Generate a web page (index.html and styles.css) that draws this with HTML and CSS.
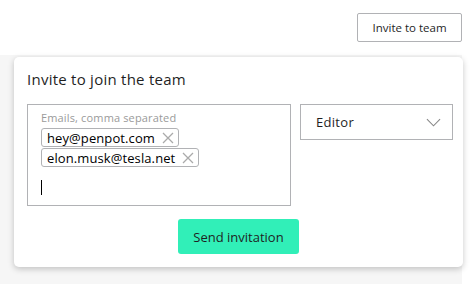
FILE: index.html
```html
<!DOCTYPE html>
<html>
<head>
<meta charset="utf-8">
<link rel="stylesheet" href="styles.css">
</head>
<body>
<header class="topbar">
  <button class="btn-outline">Invite to team</button>
</header>
<main class="stage">
  <section class="card">
    <h2 class="card-title">Invite to join the team</h2>
    <div class="form-row">
      <div class="emails">
        <div class="emails-label">Emails, comma separated</div>
        <div class="chip"><span>hey@penpot.com</span><svg class="chip-x" viewBox="0 0 12 12" width="12" height="12"><path d="M1 1L11 11M11 1L1 11"/></svg></div>
        <div class="chip"><span>elon.musk@tesla.net</span><svg class="chip-x" viewBox="0 0 12 12" width="12" height="12"><path d="M1 1L11 11M11 1L1 11"/></svg></div>
        <div class="caret"></div>
      </div>
      <div class="select">
        <span>Editor</span>
        <svg class="chev" viewBox="0 0 16 9" width="15" height="9"><path d="M1 1L8 8L15 1"/></svg>
      </div>
    </div>
    <div class="actions">
      <button class="btn-primary">Send invitation</button>
    </div>
  </section>
</main>
</body>
</html>
```
FILE: styles.css
```css
* { box-sizing: border-box; }
html, body { margin: 0; padding: 0; background: #fff; }
body {
  font-family: "Open Sans", "Noto Sans", sans-serif;
  color: #1f1f1f;
  width: 476px;
  height: 284px;
  overflow: hidden;
}
.topbar {
  height: 55px;
  display: flex;
  justify-content: flex-end;
  align-items: flex-start;
  padding: 13px 14px 0 0;
}
.btn-outline {
  font-family: inherit;
  font-size: 11.5px;
  color: #1f1f1f;
  background: #fff;
  border: 1px solid #b1b2b5;
  border-radius: 2px;
  width: 105px;
  height: 29px;
  padding: 0;
}
.stage {
  background: #f6f6f6;
  width: 462px;
  height: 229px;
  padding: 2px 0 0 14px;
}
.card {
  width: 449px;
  height: 210px;
  background: #fff;
  border-radius: 5px;
  box-shadow: 0 2px 6px rgba(0,0,0,0.22);
  padding: 13px 13px 13px 13px;
  display: flex;
  flex-direction: column;
}
.card-title {
  margin: 0;
  font-size: 15px;
  letter-spacing: 0.25px;
  font-weight: 400;
  line-height: 19px;
  color: #1f1f1f;
}
.form-row {
  display: flex;
  gap: 9px;
  margin-top: 15px;
  align-items: flex-start;
}
.emails {
  flex-shrink: 0;
  width: 264px;
  height: 102px;
  border: 1px solid #b1b2b5;
  padding: 6px 13px 0 13px;
  display: flex;
  flex-direction: column;
  align-items: flex-start;
}
.emails-label {
  font-size: 11px;
  letter-spacing: 0.15px;
  line-height: 14px;
  color: #9a9a9a;
  margin-bottom: 3px;
}
.chip {
  display: flex;
  align-items: center;
  gap: 7px;
  height: 19px;
  border: 1px solid #b1b2b5;
  border-radius: 3px;
  padding: 0 4px 0 5px;
  font-size: 13px;
  letter-spacing: 0.1px;
  color: #000;
  margin-bottom: 1px;
}
.chip-x { stroke: #aaa; stroke-width: 1.3; fill: none; }
.caret {
  width: 1px;
  height: 15px;
  background: #000;
  margin-top: 12px;
}
.select {
  flex-shrink: 0;
  width: 153px;
  height: 36px;
  border: 1px solid #b1b2b5;
  display: flex;
  align-items: center;
  justify-content: space-between;
  padding: 0 11px 0 15px;
  font-size: 13px;
  letter-spacing: 0.3px;
}
.chev { stroke: #888; stroke-width: 1.2; fill: none; }
.actions {
  display: flex;
  justify-content: center;
  margin-top: 13px;
}
.btn-primary {
  font-family: inherit;
  font-size: 13px;
  color: #1f1f1f;
  background: #31efb8;
  border: none;
  border-radius: 3px;
  width: 121px;
  height: 35px;
  padding: 0;
}
```
